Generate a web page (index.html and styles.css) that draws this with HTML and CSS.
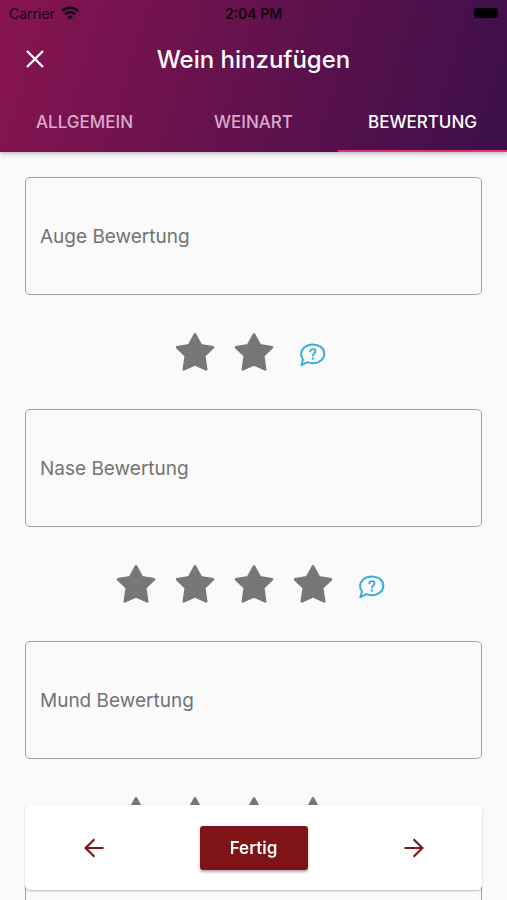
FILE: index.html
```html
<!DOCTYPE html>
<html lang="de">
<head>
    <meta charset="UTF-8" />
    <meta name="viewport" content="width=device-width, initial-scale=1.0"/>
    <title>Wein hinzufügen</title>
    <link rel="stylesheet" href="styles.css">
</head>
<body>
<svg class="symbols" aria-hidden="true">
    <symbol id="star" viewBox="0 0 40 40">
        <path d="M20 2.4 L26 13.4 L38 15.3 L29.2 23.8 L31.2 37.4 L20 32.3 L8.8 37.4 L10.8 23.8 L2 15.3 L14 13.4 Z" fill="currentColor" stroke="currentColor" stroke-width="2.6" stroke-linejoin="round"/>
    </symbol>
    <symbol id="help" viewBox="0 0 26 24">
        <path d="M1.4 22.2 L3 16.4 C1.6 14.8 1.1 13 1.1 11 C1.1 5.8 6.2 1.4 12.8 1.4 C19.3 1.4 24.3 5.4 24.3 10.7 C24.3 16 19.3 20.2 12.8 20.2 C10.9 20.2 9.2 19.9 7.6 19.2 Z" fill="none" stroke="currentColor" stroke-width="2" stroke-linejoin="round"/>
        <path d="M10.3 8.4 C10.3 5.3 15.5 5.4 15.5 8.4 C15.5 10.5 12.9 10.4 12.9 12.7" fill="none" stroke="currentColor" stroke-width="1.9" stroke-linecap="round"/>
        <circle cx="12.9" cy="15.6" r="1.2" fill="currentColor"/>
    </symbol>
</svg>

<header class="app-header">
    <div class="status-bar">
        <span class="carrier">Carrier
            <svg width="18" height="14" viewBox="0 0 18 14" fill="none" stroke="currentColor" stroke-width="2.6">
                <path d="M1 5 C5.5 0.6 12.5 0.6 17 5"/>
                <path d="M4 8.4 C7 5.6 11 5.6 14 8.4"/>
                <path d="M9 13.6 L6 10.6 C7.6 9.2 10.4 9.2 12 10.6 Z" fill="currentColor" stroke="none"/>
            </svg>
        </span>
        <span class="clock">2:04 PM</span>
        <span class="battery"></span>
    </div>
    <div class="title-bar">
        <button class="icon-button" type="button" aria-label="Schließen">
            <svg width="18" height="18" viewBox="0 0 18 18" fill="none" stroke="currentColor" stroke-width="2.4"><path d="M1 1 L17 17 M17 1 L1 17"/></svg>
        </button>
        <h1>Wein hinzufügen</h1>
    </div>
    <nav class="tabs">
        <a href="#allgemein">ALLGEMEIN</a>
        <a href="#weinart">WEINART</a>
        <a href="#bewertung" class="active">BEWERTUNG</a>
    </nav>
</header>

<main class="ratings">
    <div class="field">
        <label for="auge">Auge Bewertung</label>
        <textarea id="auge"></textarea>
    </div>
    <div class="stars">
        <button type="button" aria-label="1 Stern"><svg class="star"><use href="#star"/></svg></button>
        <button type="button" aria-label="2 Sterne"><svg class="star"><use href="#star"/></svg></button>
        <button type="button" aria-label="Hilfe"><svg class="help"><use href="#help"/></svg></button>
    </div>
    <div class="field">
        <label for="nase">Nase Bewertung</label>
        <textarea id="nase"></textarea>
    </div>
    <div class="stars">
        <button type="button" aria-label="1 Stern"><svg class="star"><use href="#star"/></svg></button>
        <button type="button" aria-label="2 Sterne"><svg class="star"><use href="#star"/></svg></button>
        <button type="button" aria-label="3 Sterne"><svg class="star"><use href="#star"/></svg></button>
        <button type="button" aria-label="4 Sterne"><svg class="star"><use href="#star"/></svg></button>
        <button type="button" aria-label="Hilfe"><svg class="help"><use href="#help"/></svg></button>
    </div>
    <div class="field">
        <label for="mund">Mund Bewertung</label>
        <textarea id="mund"></textarea>
    </div>
    <div class="stars">
        <button type="button" aria-label="1 Stern"><svg class="star"><use href="#star"/></svg></button>
        <button type="button" aria-label="2 Sterne"><svg class="star"><use href="#star"/></svg></button>
        <button type="button" aria-label="3 Sterne"><svg class="star"><use href="#star"/></svg></button>
        <button type="button" aria-label="4 Sterne"><svg class="star"><use href="#star"/></svg></button>
        <button type="button" aria-label="Hilfe"><svg class="help"><use href="#help"/></svg></button>
    </div>
    <div class="field">
        <textarea aria-label="Bewertung"></textarea>
    </div>
</main>

<footer class="bottom-bar">
    <button class="icon-button" type="button" aria-label="Zurück">
        <svg width="20" height="20" viewBox="0 0 20 20" fill="none" stroke="currentColor" stroke-width="2.2"><path d="M19.5 10 H2 M10.4 1.2 L1.6 10 L10.4 18.8"/></svg>
    </button>
    <button class="done-button" type="button">Fertig</button>
    <button class="icon-button" type="button" aria-label="Weiter">
        <svg width="20" height="20" viewBox="0 0 20 20" fill="none" stroke="currentColor" stroke-width="2.2"><path d="M0.5 10 H18 M9.6 1.2 L18.4 10 L9.6 18.8"/></svg>
    </button>
</footer>
</body>
</html>
```
FILE: styles.css
```css
* { box-sizing: border-box; }
html, body { height: 100%; margin: 0; padding: 0; }
body {
    display: flex; flex-direction: column; overflow: hidden;
    font-family: Inter, 'Liberation Sans', sans-serif;
    background: #fafafa;
}
button { border: none; background: none; padding: 0; font-family: inherit; cursor: pointer; }
svg { display: block; }
.symbols { position: absolute; width: 0; height: 0; }

/* header */
.app-header {
    position: relative; z-index: 2; flex: none;
    background: linear-gradient(107deg, #88144f, #3c0f4b);
    box-shadow: 0 1px 5px #0005; color: #fff;
}
.status-bar {
    display: grid; grid-template-columns: 1fr auto 1fr; align-items: center;
    height: 26px; padding: 0 9px; color: #14020f; font-size: 14px;
}
.carrier { display: flex; align-items: center; gap: 6px; }
.clock { font-weight: 600; }
.battery { justify-self: end; width: 24px; height: 10px; border-radius: 3px; background: #000; }
.title-bar { display: grid; grid-template-columns: 70px 1fr 70px; align-items: center; height: 66px; }
.title-bar h1 { margin: 0; font-size: 24px; font-weight: 500; text-align: center; }
.icon-button { display: flex; align-items: center; justify-content: center; width: 70px; height: 60px; color: inherit; }
.tabs { display: grid; grid-template-columns: repeat(3, 1fr); }
.tabs a {
    height: 60px; line-height: 60px; text-align: center; text-decoration: none;
    font-size: 17px; font-weight: 500; color: #dba9cd;
}
.tabs a.active { color: #fff; box-shadow: inset 0 -2px #e2307c; }

/* ratings */
.ratings { flex: 1; overflow-y: auto; scrollbar-width: none; padding: 25px 25px 110px; }
.field { display: grid; align-items: center; }
.field label { grid-area: 1 / 1; padding-left: 15px; font-size: 19px; color: #737373; pointer-events: none; }
.field textarea {
    grid-area: 1 / 1; display: block; width: 100%; height: 118px; resize: none; outline: none;
    padding: 15px; border: 1px solid #a3a3a3; border-radius: 5px;
    background: transparent; font-family: inherit; font-size: 19px; color: #222;
}
.stars { display: flex; justify-content: center; align-items: center; height: 114px; }
.stars button { display: flex; align-items: center; justify-content: center; width: 59px; height: 59px; }
.star { width: 40px; height: 40px; color: #777; }
.help { width: 26px; height: 24px; margin-top: 6px; color: #35aee0; }

/* bottom bar stays above the scrolling list */
.bottom-bar {
    position: fixed; left: 25px; right: 25px; bottom: 10px; z-index: 2;
    display: flex; justify-content: space-around; align-items: center;
    height: 85px; border-radius: 5px; background: #fff; color: #7f1416;
    box-shadow: 0 1px 2px #0004;
}
.bottom-bar .icon-button { width: 62px; }
.done-button {
    width: 108px; height: 44px; border-radius: 3px; background: #7f1416; color: #fff;
    font-size: 17px; font-weight: 600; box-shadow: 0 2px 3px #0005;
}
```
